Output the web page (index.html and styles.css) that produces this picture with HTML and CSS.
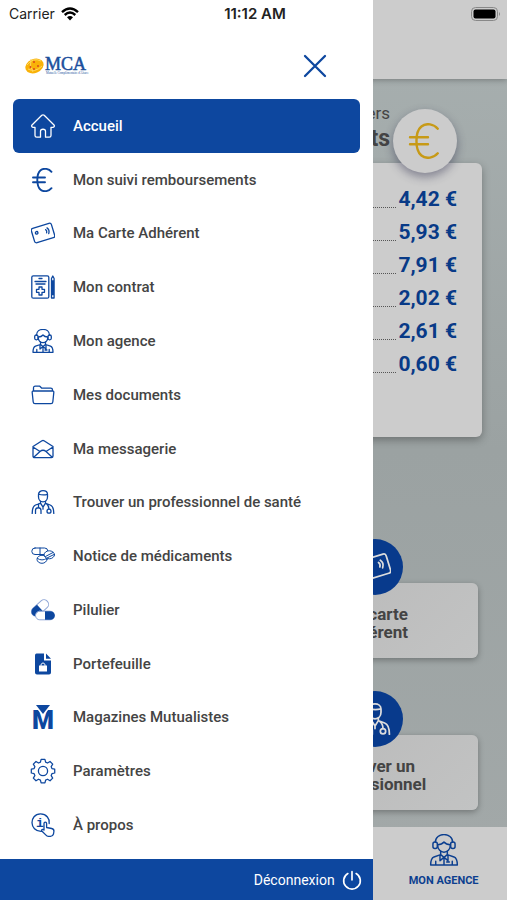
FILE: index.html
```html
<!DOCTYPE html>
<html lang="fr">
<head>
    <meta charset="UTF-8">
    <meta name="viewport" content="width=device-width, initial-scale=1.0">
    <title>MCA</title>
    <link rel="stylesheet" href="styles.css">
</head>
<body>

<!-- icônes utilisées plusieurs fois -->
<svg class="defs" aria-hidden="true">
    <symbol id="i-euro" viewBox="0 0 24 24">
        <path d="M20.500 3.800C18 .8 13 -.4 9.600 2.300 5.200 5.800 5.200 18.200 9.600 21.700c3.400 2.700 8.400 1.500 10.900-1.500M2 9.500h12M2 14.200h12"/>
    </symbol>
    <symbol id="i-card" viewBox="0 0 24 24">
        <g transform="rotate(-17 12 12)">
            <rect x="1.500" y="4.500" width="21" height="15" rx="2"/>
            <circle cx="6" cy="10" r="1.300"/>
            <path d="M15.500 9.500q1.300 1.500 0 3.500M17.300 8.300q2.200 2.700 0 6"/>
        </g>
    </symbol>
    <symbol id="i-agent" viewBox="0 0 24 24">
        <path d="M5.500 6.200C5.500-1.500 18.500-1.500 18.500 6.200M7.200 8c2.300 0 4-1 4.800-2 .8 1 2.500 2 4.800 2 0 7.500-9.600 7.500-9.600 0z"/>
        <rect x="3.700" y="6" width="3.300" height="4.800" rx="1.500"/>
        <rect x="17" y="6" width="3.300" height="4.800" rx="1.500"/>
        <path d="M9.500 13v2.500l-5 1.700C2.500 18 2 20.500 2 23.300h20c0-2.800-.5-5.300-2.500-6.100l-5-1.700V13M9.500 15.500l2.500 2 2.500-2M9 16v4l3-2.500 3 2.500v-4M12 18v5.300M5.800 20.500v2.800M18.200 20.500v2.800M14 21h2"/>
    </symbol>
    <symbol id="i-doctor" viewBox="0 0 24 24">
        <path d="M7.500 7V4.500C7.500-.6 16.500-.6 16.500 4.500V7c0 6.500-9 6.500-9 0zM7.500 4c3 1.200 6 1.200 9 .3"/>
        <path d="M9.500 11.200v2l2.500 4 2.500-4v-2M9.300 13.300L4.500 15C2 16 1.200 19 1.200 23.500M14.700 13.300l4.500 1.700c2.800 1 3.600 4 3.600 8.500M7.500 14v3.500M4.500 23.500V20.500c0-3.700 5.500-3.700 5.500 0v3M12 17.200v2M15.500 13.800q2.500 2 2.500 5.400"/>
        <circle cx="18" cy="21.200" r="2"/>
    </symbol>
</svg>

<div class="screen">
    <div class="statusbar">
        <div class="carrier">
            <span>Carrier</span>
            <svg class="wifi" viewBox="0 0 18 14" aria-hidden="true">
                <path d="M1 5.200Q9-2.200 17 5.200M3.700 8Q9 3.200 14.300 8"/>
                <path class="dot" d="M6 10.200Q9 7.700 12 10.200L9 13.400z"/>
            </svg>
        </div>
        <div class="clock">11:12 AM</div>
        <svg class="battery" viewBox="0 0 30 14" aria-hidden="true">
            <rect x=".5" y=".5" width="26" height="13" rx="4"/>
            <rect class="level" x="2.500" y="2.500" width="22" height="9" rx="2"/>
            <path class="tip" d="M28 5q2 2 0 4z"/>
        </svg>
    </div>

    <main class="page">
        <header class="topbar"></header>

        <h1 class="page-title"><span>derniers</span>remboursements</h1>
        <section class="refunds">
            <div class="badge"><svg class="icon"><use href="#i-euro"/></svg></div>
            <ul>
                <li>4,42 €</li>
                <li>5,93 €</li>
                <li>7,91 €</li>
                <li>2,02 €</li>
                <li>2,61 €</li>
                <li>0,60 €</li>
            </ul>
        </section>

        <div class="tiles">
            <a class="tile" href="#carte">
                <span class="tile-icon"><svg class="icon"><use href="#i-card"/></svg></span>
                Ma carte<br>adhérent
            </a>
            <a class="tile" href="#pro">
                <span class="tile-icon"><svg class="icon"><use href="#i-doctor"/></svg></span>
                Trouver un<br>professionnel
            </a>
        </div>

        <footer class="tabbar">
            <a class="tab" href="#agence">
                <svg class="icon"><use href="#i-agent"/></svg>
                MON AGENCE
            </a>
        </footer>
    </main>

    <aside class="drawer">
        <div class="drawer-head">
            <svg class="logo" viewBox="0 0 64 20" role="img" aria-label="MCA">
                <ellipse class="logo-ball" cx="10.500" cy="10" rx="9.500" ry="7" transform="rotate(-22 10.500 10)"/>
                <path class="logo-shine" d="M3 9Q9 1 17 5M4 13Q11 17 18 10M7 3Q5 10 9 16"/>
                <g class="logo-stars">
                    <circle cx="10" cy="6" r="1"/><circle cx="6.500" cy="11" r="1"/>
                    <circle cx="14" cy="10" r="1"/><circle cx="10" cy="13" r="1"/>
                </g>
                <text class="logo-name" x="21" y="14">MCA</text>
                <text class="logo-sub" x="22" y="18">Mutuelle Complémentaire d'Alsace</text>
            </svg>
            <button class="close" type="button" aria-label="Fermer">
                <svg class="icon" viewBox="0 0 24 24"><path d="M2 2l20 20M22 2L2 22"/></svg>
            </button>
        </div>

        <nav class="menu">
            <a class="active" href="#accueil">
                <svg class="icon" viewBox="0 0 24 24"><path d="M10.800 1.300L1 11c-1 1.200 0 2.500 1.500 2.300H4v8.200c0 1.200.5 1.700 1.700 1.700h3.800v-6c0-2.600 5-2.600 5 0v6h3.800c1.200 0 1.700-.5 1.700-1.700v-8.200h1.500c1.500.2 2.500-1.100 1.500-2.300l-9.800-9.700q-1.200-1-2.400 0z"/></svg>
                Accueil
            </a>
            <a href="#suivi">
                <svg class="icon bold"><use href="#i-euro"/></svg>
                Mon suivi remboursements
            </a>
            <a href="#carte">
                <svg class="icon"><use href="#i-card"/></svg>
                Ma Carte Adhérent
            </a>
            <a href="#contrat">
                <svg class="icon" viewBox="0 0 24 24"><rect x=".8" y=".8" width="17" height="22.400" rx="1.500"/><path d="M8 3.500h3M4 6.500h11M5 9h9M8 12h3v2.300h2.500v3H11V20H8v-2.700H5.500v-3H8zM20.500 5V3.500L21.800 1l1.300 2.500V23h-2.600zM20.500 6h2.600M20.500 19.500h2.600M21.800 7v12"/></svg>
                Mon contrat
            </a>
            <a href="#agence">
                <svg class="icon"><use href="#i-agent"/></svg>
                Mon agence
            </a>
            <a href="#documents">
                <svg class="icon" viewBox="0 0 24 24"><path d="M2.500 8V5c0-1.200.6-1.800 1.800-1.800h4.500l2 2h8.900c1.200 0 1.800.6 1.800 1.800v1M2.500 8h19c1 0 1.500.5 1.300 1.500l-1 9.500c-.1 1-.8 1.600-1.800 1.600H4c-1 0-1.700-.6-1.800-1.600l-1-9.500C1 8.500 1.500 8 2.500 8z"/></svg>
                Mes documents
            </a>
            <a href="#messagerie">
                <svg class="icon" viewBox="0 0 24 24"><path d="M2 9.500L11 3.800q1-.6 2 0l9 5.700V19c0 1-.6 1.600-1.600 1.600H3.600C2.600 20.600 2 20 2 19zM2 10l7 4.500L3 20M22 10l-7 4.500 6 5.500M9 14.500q3-2.500 6 0"/></svg>
                Ma messagerie
            </a>
            <a href="#pro">
                <svg class="icon"><use href="#i-doctor"/></svg>
                Trouver un professionnel de santé
            </a>
            <a href="#notice">
                <svg class="icon thin" viewBox="0 0 24 24"><rect class="blank" x=".8" y="4" width="16" height="6.500" rx="3.200"/><path d="M9 4v6.500"/><ellipse class="blank" cx="11" cy="15.300" rx="5" ry="4"/><path d="M6.500 14.500q4.500 3 9 0"/><ellipse class="blank" cx="18.300" cy="10.800" rx="5.200" ry="4"/><path d="M14.500 12.500l7.500-4M16 14l7-3.500"/></svg>
                Notice de médicaments
            </a>
            <a href="#pilulier">
                <svg class="icon thin" viewBox="0 0 24 24"><g transform="rotate(-42 9 10)"><rect class="blank pale" x="-1" y="5.500" width="20" height="9" rx="4.500"/><path class="solid" d="M9 5.500H3.500a4.500 4.500 0 0 0 0 9H9z"/></g><rect class="blank pale" x="4.500" y="13.200" width="18.800" height="8.600" rx="4.300"/><path class="solid" d="M14 13.200h5.500a4.300 4.300 0 0 1 0 8.600H14z"/></svg>
                Pilulier
            </a>
            <a href="#portefeuille">
                <svg class="icon thin" viewBox="0 0 24 24"><path class="solid" d="M5.500 1.500H13v7h7v12q0 2-2 2H6q-2 0-2-2V3.500q0-2 1.500-2zM15 1.500l5 5.300h-5z"/><path class="white" d="M8 13.500h8v6H8z"/><path class="handle" d="M10 13.500v-1.200q2-3 4 0v1.200"/></svg>
                Portefeuille
            </a>
            <a href="#magazines">
                <svg class="icon" viewBox="0 0 24 24"><text class="m-letter" x="12" y="23.500">M</text><path class="white" d="M3 0h18l-9 11.500z"/><path class="tri" d="M5 0h14L12 9z"/></svg>
                Magazines Mutualistes
            </a>
            <a href="#parametres">
                <svg class="icon" viewBox="0 0 24 24"><circle cx="12" cy="12" r="4.600"/><path d="M10 .8h4l.7 2.900 2 .9 2.600-1.600 2.800 2.800-1.600 2.600.8 2 2.900.6v4l-2.900.7-.8 2 1.600 2.600-2.800 2.800-2.600-1.600-2 .9-.7 2.800h-4l-.7-2.800-2-.9-2.600 1.600-2.800-2.800 1.600-2.600-.8-2L-.200 15v-4l2.900-.6.8-2-1.600-2.600L4.700 3l2.600 1.600 2-.9z" transform="translate(.5 -.4) scale(.96)"/></svg>
                Paramètres
            </a>
            <a href="#apropos">
                <svg class="icon" viewBox="0 0 24 24"><path d="M10.500 18.300C-2 18.800-2 1 9.500.9c6 0 9.500 5 8.700 9.600"/><text class="i-letter" x="9" y="14">i</text><path d="M13 17V10.500c0-1.800 2.600-1.800 2.600 0v4l5 1c1.700.4 2.500 1.500 2.300 3l-.4 2.500q-.7 2.300-3 2.300h-2.200c-1 0-1.700-.4-2.300-1.200L10.800 18c-.8-1.300.8-2.300 2.200-1z"/></svg>
                À propos
            </a>
        </nav>

        <button class="logout" type="button">
            Déconnexion
            <svg class="icon" viewBox="0 0 24 24"><path d="M12 2v10M7 4.200a10 10 0 1 0 10 0"/></svg>
        </button>
    </aside>
</div>

</body>
</html>
```
FILE: styles.css
```css
* {
    box-sizing: border-box;
}
body {
    margin: 0;
    font-family: Roboto, "Liberation Sans", sans-serif;
    color: #444;
}
a {
    color: inherit;
    text-decoration: none;
}
button {
    border: 0;
    padding: 0;
    background: none;
    font: inherit;
    cursor: pointer;
}
.defs {
    display: none;
}
.icon {
    width: 24px;
    height: 24px;
    flex: none;
    fill: none;
    stroke: currentColor;
    stroke-width: 1.3;
    stroke-linecap: round;
    stroke-linejoin: round;
    overflow: visible;
}
.icon.bold {
    stroke-width: 1.9;
}
.icon.thin {
    stroke-width: 1;
}
.screen {
    position: relative;
    min-height: 100vh;
    overflow: hidden;
    display: flex;
}

/* barre d'état */
.statusbar {
    position: absolute;
    top: 0;
    left: 0;
    right: 0;
    z-index: 3;
    display: grid;
    grid-template-columns: 1fr auto 1fr;
    align-items: center;
    height: 27px;
    padding: 0 6px 0 9px;
    font-family: Inter, "Liberation Sans", sans-serif;
    font-size: 15px;
    color: #222;
}
.carrier {
    display: flex;
    align-items: center;
    gap: 6px;
    font-size: 14px;
}
.wifi {
    width: 18px;
    height: 14px;
    fill: none;
    stroke: #000;
    stroke-width: 2.4;
}
.wifi .dot {
    fill: #000;
    stroke: none;
}
.clock {
    font-weight: 600;
}
.battery {
    width: 30px;
    height: 14px;
    justify-self: end;
    fill: none;
    stroke: #888;
}
.battery .level {
    fill: #000;
    stroke: none;
}
.battery .tip {
    fill: #888;
    stroke: none;
}

/* page assombrie derrière le menu */
.page {
    flex: 1;
    display: flex;
    flex-direction: column;
    background: linear-gradient(#a8b0b0, #9ba2a2 50%, #a3a9a9);
}
.topbar {
    height: 79px;
    background: #ccc;
    box-shadow: 0 1px 6px rgba(0, 0, 0, 0.3);
}
.page-title {
    margin: 22px 117px 0 0;
    text-align: right;
    font-size: 23px;
    font-weight: 700;
    line-height: 28px;
}
.page-title span {
    display: block;
    font-size: 17px;
    font-weight: 400;
    line-height: 24px;
}
.refunds {
    position: relative;
    margin: 10px 25px 0;
    padding: 20px 25px 56px;
    background: #ccc;
    border-radius: 6px;
    box-shadow: 0 3px 8px rgba(0, 0, 0, 0.3);
}
.refunds ul {
    margin: 0;
    padding: 0;
    list-style: none;
}
.refunds li {
    display: flex;
    gap: 2px;
    font-size: 21px;
    font-weight: 700;
    line-height: 33px;
    color: #083a87;
}
.refunds li::before {
    content: "";
    flex: 1;
    height: 24px;
    border-bottom: 1px dotted #555;
}
.badge {
    position: absolute;
    top: -54px;
    right: 25px;
    display: flex;
    align-items: center;
    justify-content: center;
    width: 64px;
    height: 64px;
    border-radius: 50%;
    background: #ccc;
    color: #c79a17;
    box-shadow: 0 4px 10px rgba(40, 40, 70, 0.45);
}
.badge .icon {
    width: 36px;
    height: 36px;
    stroke-width: 1.6;
}
.tiles {
    display: grid;
    grid-template-columns: 1fr 1fr;
    gap: 77px 33px;
    margin: 146px 29px 17px;
}
.tile {
    position: relative;
    grid-column: 2;
    padding: 22px 8px 17px;
    border-radius: 6px;
    background: linear-gradient(135deg, #b9b9b9, #c2c3c3);
    box-shadow: 0 2px 6px rgba(0, 0, 0, 0.3);
    text-align: center;
    font-size: 17px;
    font-weight: 700;
    line-height: 18px;
}
.tile-icon {
    position: absolute;
    top: -44px;
    left: calc(50% - 27px);
    display: flex;
    align-items: center;
    justify-content: center;
    width: 56px;
    height: 56px;
    border-radius: 50%;
    background: #083a8c;
    color: #ddd;
}
.tile-icon .icon {
    width: 32px;
    height: 32px;
}
.tabbar {
    display: grid;
    grid-template-columns: repeat(4, 1fr);
    margin-top: auto;
    height: 73px;
    background: #ccc;
}
.tab {
    grid-column: 4;
    display: flex;
    flex-direction: column;
    align-items: center;
    gap: 8px;
    padding-top: 7px;
    font-size: 11px;
    font-weight: 700;
    line-height: 14px;
    color: #0c3f8f;
}
.tab .icon {
    width: 32px;
    height: 32px;
    stroke-width: 1.1;
}

/* menu latéral */
.drawer {
    position: absolute;
    top: 0;
    bottom: 0;
    left: 0;
    z-index: 2;
    display: flex;
    flex-direction: column;
    width: 73.5%;
    background: #fff;
}
.drawer-head {
    display: flex;
    align-items: center;
    justify-content: space-between;
    height: 99px;
    padding: 33px 46px 0 24px;
}
.logo {
    width: 64px;
    height: 20px;
    overflow: visible;
}
.logo-ball {
    fill: #f9b208;
}
.logo-shine {
    fill: none;
    stroke: #ffd75e;
    stroke-width: 1;
}
.logo-stars {
    fill: #d8471b;
}
.logo-name {
    font: 18px "Liberation Serif", serif;
    fill: #1b4f9c;
    stroke: #1b4f9c;
    stroke-width: 0.5;
}
.logo-sub {
    font: 3px "Liberation Serif", serif;
    fill: #1b4f9c;
}
.close {
    display: flex;
    color: #0d479f;
}
.close .icon {
    stroke-width: 2.3;
}
.menu {
    flex: 1;
    display: flex;
    flex-direction: column;
    padding: 0 13px 7px;
}
.menu a {
    flex: 1;
    display: flex;
    align-items: center;
    gap: 18px;
    padding: 0 18px;
    border-radius: 6px;
    font-size: 15px;
    font-weight: 500;
}
.menu .icon {
    color: #0d479f;
}
.menu a.active {
    background: #0d479f;
    color: #fff;
}
.menu a.active .icon {
    color: #fff;
}
.solid,
.tri {
    fill: currentColor;
    stroke: none;
}
.blank {
    fill: #fff;
}
.pale {
    stroke: #8fa6d6;
}
.white {
    fill: #fff;
    stroke: none;
}
.handle {
    stroke: #fff;
}
.m-letter {
    font: 900 25px Roboto, sans-serif;
    text-anchor: middle;
    fill: currentColor;
    stroke: none;
}
.i-letter {
    font: 700 13px "Liberation Mono", monospace;
    text-anchor: middle;
    fill: currentColor;
    stroke: none;
}
.logout {
    display: flex;
    align-items: center;
    justify-content: flex-end;
    gap: 7px;
    height: 41px;
    padding: 0 11px;
    background: #0d479f;
    color: #fff;
    font-size: 14px;
}
.logout .icon {
    width: 20px;
    height: 20px;
    stroke-width: 2;
}
```
